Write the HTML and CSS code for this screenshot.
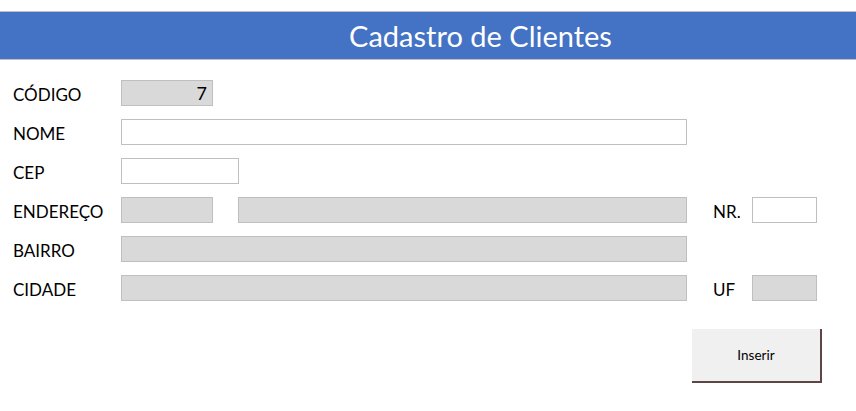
FILE: index.html
```html
<!DOCTYPE html>
<html lang="pt-BR">
<head>
  <meta charset="UTF-8">
  <meta name="viewport" content="width=device-width, initial-scale=1.0">
  <title>Cadastro de Clientes</title>
  <link rel="stylesheet" href="styles.css">
</head>
<body>
  <header class="title-bar">
    <h1>Cadastro de Clientes</h1>
  </header>

  <form class="client-form">
    <div class="row">
      <label class="label">CÓDIGO</label>
      <div class="field short locked num">7</div>
    </div>
    <div class="row">
      <label class="label">NOME</label>
      <div class="field wide"></div>
    </div>
    <div class="row">
      <label class="label">CEP</label>
      <div class="field cep"></div>
    </div>
    <div class="row">
      <label class="label">ENDEREÇO</label>
      <div class="main split">
        <div class="field short locked"></div>
        <div class="field grow locked"></div>
      </div>
      <label class="side-label">NR.</label>
      <div class="field side"></div>
    </div>
    <div class="row">
      <label class="label">BAIRRO</label>
      <div class="field wide locked"></div>
    </div>
    <div class="row">
      <label class="label">CIDADE</label>
      <div class="field wide locked"></div>
      <label class="side-label">UF</label>
      <div class="field side locked"></div>
    </div>

    <div class="actions">
      <button type="button" class="btn">Inserir</button>
    </div>
  </form>
</body>
</html>
```

FILE: styles.css
```css
* {
  margin: 0;
  padding: 0;
  box-sizing: border-box;
  font-family: Lato, 'Open Sans', sans-serif;
}

body {
  background: #fff;
  color: #000;
}

.title-bar {
  margin-top: 11px;
  height: 49px;
  background: #4472c4;
  border-top: 1px solid #c0c0c0;
  border-bottom: 1px solid #c0c0c0;
  display: flex;
  align-items: center;
  justify-content: center;
  padding-left: 105px;
}

.title-bar h1 {
  color: #fff;
  font-size: 29px;
  font-weight: 400;
}

.client-form {
  padding: 20px 0 0 13px;
  display: flex;
  flex-direction: column;
  gap: 13px;
}

.row {
  display: flex;
  align-items: center;
  height: 26px;
}

.label {
  width: 108px;
  font-size: 17px;
  padding-top: 2px;
}

.field {
  height: 26px;
  border: 1px solid #bfbfbf;
  background: #fff;
}

.locked {
  background: #d9d9d9;
}

.num {
  text-align: right;
  padding-right: 5px;
  font-size: 18px;
  line-height: 25px;
}

.short {
  width: 92px;
}

.wide,
.main {
  width: 566px;
}

.cep {
  width: 118px;
}

.split {
  display: flex;
  gap: 25px;
}

.grow {
  flex: 1;
}

.side-label {
  width: 39px;
  margin-left: 26px;
  font-size: 17px;
  padding-top: 2px;
}

.side {
  width: 65px;
}

.actions {
  display: flex;
  padding-left: 679px;
  margin-top: 15px;
}

.btn {
  width: 130px;
  height: 54px;
  background: #f0f0f0;
  border: none;
  border-right: 2px solid #5e4646;
  border-bottom: 2px solid #5e4646;
  font-size: 13.5px;
  color: #000;
  cursor: pointer;
}
```
